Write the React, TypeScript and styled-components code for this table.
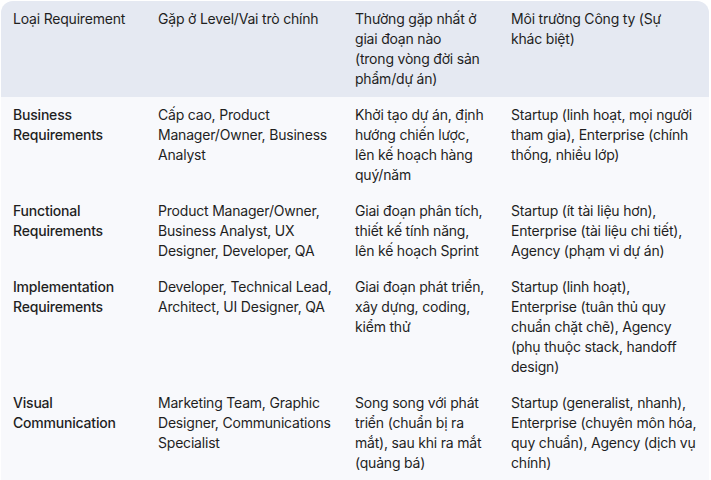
import React from "react";
import styled, { createGlobalStyle } from "styled-components";

const Global = createGlobalStyle`
  html, body { margin: 0; padding: 0; background: #ffffff; }
  body { font-family: Inter, Roboto, "Noto Sans", Arial, sans-serif; color: #1f1f1f; }
`;

const Wrap = styled.div`
  padding: 1px 2px 0 1px;
`;

const Table = styled.div`
  display: grid;
  grid-template-columns: 145px 197px 156px 210px;
  width: 708px;
  border-radius: 12px 12px 0 0;
  overflow: hidden;
  background: #f8f9fc;
`;

const Row = styled.div<{ $head?: boolean }>`
  display: contents;
  & > div {
    background: ${(p) => (p.$head ? "#e5e9f2" : "#f8f9fc")};
  }
`;

const Cell = styled.div<{ $strong?: boolean }>`
  padding: 8px 12px;
  font-size: 14px;
  line-height: 20px;
  letter-spacing: -0.2px;
  font-weight: ${(p) => (p.$strong ? 500 : 400)};
  color: #1f1f1f;
`;

const Line = styled.span`
  display: block;
  white-space: nowrap;
`;

const head: string[][] = [
  ["Loại Requirement"],
  ["Gặp ở Level/Vai trò chính"],
  ["Thường gặp nhất ở", "giai đoạn nào", "(trong vòng đời sản", "phẩm/dự án)"],
  ["Môi trường Công ty (Sự", "khác biệt)"],
];

const rows: string[][][] = [
  [
    ["Business", "Requirements"],
    ["Cấp cao, Product", "Manager/Owner, Business", "Analyst"],
    ["Khởi tạo dự án, định", "hướng chiến lược,", "lên kế hoạch hàng", "quý/năm"],
    ["Startup (linh hoạt, mọi người", "tham gia), Enterprise (chính", "thống, nhiều lớp)"],
  ],
  [
    ["Functional", "Requirements"],
    ["Product Manager/Owner,", "Business Analyst, UX", "Designer, Developer, QA"],
    ["Giai đoạn phân tích,", "thiết kế tính năng,", "lên kế hoạch Sprint"],
    ["Startup (ít tài liệu hơn),", "Enterprise (tài liệu chi tiết),", "Agency (phạm vi dự án)"],
  ],
  [
    ["Implementation", "Requirements"],
    ["Developer, Technical Lead,", "Architect, UI Designer, QA"],
    ["Giai đoạn phát triển,", "xây dựng, coding,", "kiểm thử"],
    [
      "Startup (linh hoạt),",
      "Enterprise (tuân thủ quy",
      "chuẩn chặt chẽ), Agency",
      "(phụ thuộc stack, handoff",
      "design)",
    ],
  ],
  [
    ["Visual", "Communication"],
    ["Marketing Team, Graphic", "Designer, Communications", "Specialist"],
    ["Song song với phát", "triển (chuẩn bị ra", "mắt), sau khi ra mắt", "(quảng bá)"],
    ["Startup (generalist, nhanh),", "Enterprise (chuyên môn hóa,", "quy chuẩn), Agency (dịch vụ", "chính)"],
  ],
];

function Lines({ lines }: { lines: string[] }) {
  return (
    <>
      {lines.map((l, i) => (
        <Line key={i}>{l}</Line>
      ))}
    </>
  );
}

export default function App() {
  return (
    <Wrap>
      <Global />
      <Table>
        <Row $head>
          {head.map((h, i) => (
            <Cell key={i}>
              <Lines lines={h} />
            </Cell>
          ))}
        </Row>
        {rows.map((r, ri) => (
          <Row key={ri}>
            {r.map((c, i) => (
              <Cell key={i} $strong={i === 0}>
                <Lines lines={c} />
              </Cell>
            ))}
          </Row>
        ))}
      </Table>
    </Wrap>
  );
}
